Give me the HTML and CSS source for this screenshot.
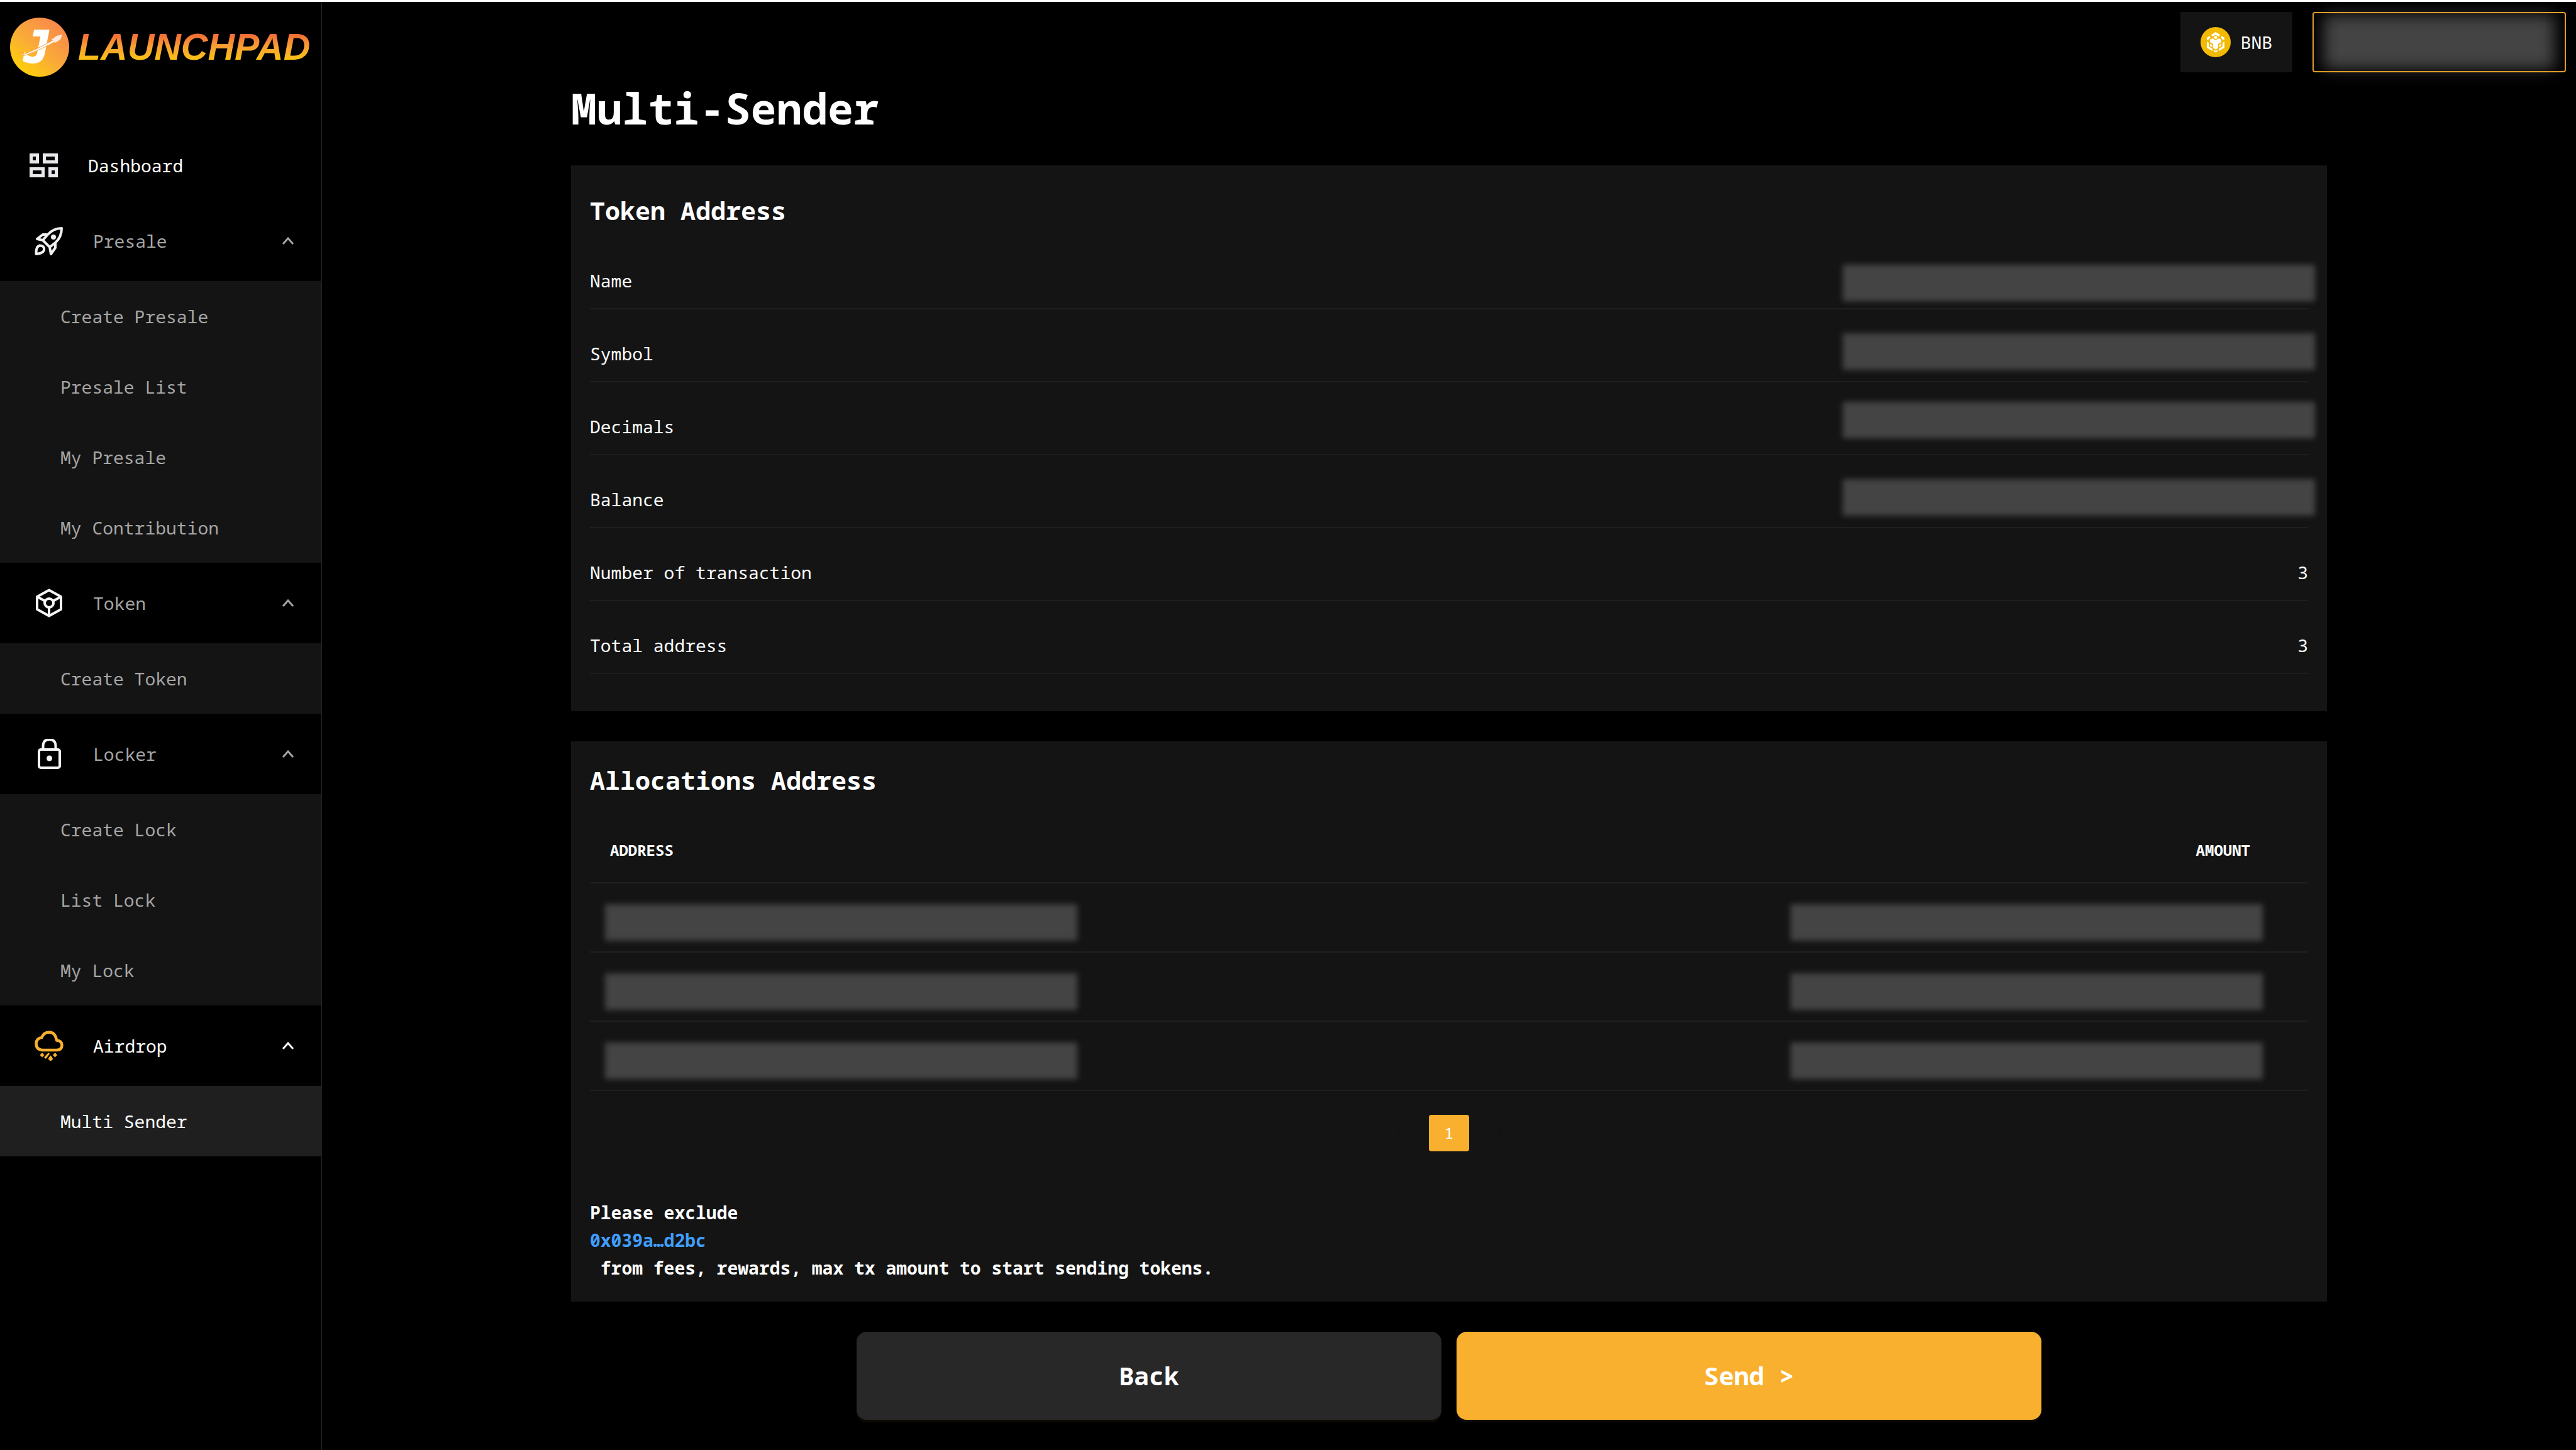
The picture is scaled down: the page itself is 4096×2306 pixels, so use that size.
FILE: index.html
```html
<!DOCTYPE html>
<html lang="en">
<head>
<meta charset="utf-8">
<title>Launchpad – Multi-Sender</title>
<meta name="viewport" content="width=device-width, initial-scale=1">
<link rel="stylesheet" href="styles.css">
</head>
<body>
<svg class="defs" width="0" height="0" aria-hidden="true">
  <symbol id="chevron" viewBox="0 0 20 14"><path d="M2 12 L10 3 L18 12" fill="none" stroke="currentColor" stroke-width="3"/></symbol>
</svg>
<div class="layout">
  <aside class="sidebar">
    <a class="logo" href="#">
      <svg class="logo-mark" viewBox="0 0 94 94" aria-hidden="true">
        <defs>
          <linearGradient id="coin" x1="0.15" y1="0.9" x2="0.8" y2="0.1">
            <stop offset="0" stop-color="#ffd10a"/><stop offset="0.5" stop-color="#f9a93a"/><stop offset="1" stop-color="#f98a4a"/>
          </linearGradient>
        </defs>
        <circle cx="47" cy="47" r="47" fill="url(#coin)"/>
        <text class="logo-letter" x="22" y="71">J</text>
        <path d="M17 55 Q18 59 23 58 Q48 48 72 34 L80 28 L83 27 L81 33 L74 37 Q50 51 24 60 Q17 61 17 55 Z" fill="#fff" stroke="#f9a348" stroke-width="1"/>
        <path d="M66 35 L74 29 L83 27 L80 35 L72 40 Z" fill="#ffe9dc"/>
      </svg>
      <span class="logo-text">LAUNCHPAD</span>
    </a>
    <nav class="menu">
      <a class="menu-dashboard" href="#">
        <svg class="icon" viewBox="0 0 48 48" aria-hidden="true"><g fill="none" stroke="#e8e8ec" stroke-width="5"><path d="M3.500 7.500H13.500V18.500H3.500ZM24.500 7.500H43.500V18.500H24.500ZM3.500 29.500H22.500V40.500H3.500ZM33.500 29.500H43.500V40.500H33.500Z"/></g></svg>
        Dashboard
      </a>

      <button class="menu-head" type="button">
        <svg class="icon" viewBox="0 0 48 48" aria-hidden="true"><g fill="none" stroke="#f0f0f2" stroke-width="4" stroke-linejoin="round"><path d="M44 4 Q31 4 22 14 L14 23 L25 34 L34 27 Q44 18 44 4Z"/><path d="M22 14 L14 14 L5 21 L14 23"/><path d="M34 27 L34 35 L27 45 L25 34"/><path d="M3.500 45 Q3 33 9 31.500 Q17 31.500 16 39 Q14 44 3.500 45Z"/></g><circle cx="31" cy="18" r="4" fill="#f0f0f2"/></svg>
        <span class="menu-label">Presale</span>
        <svg class="chevron" aria-hidden="true"><use href="#chevron"/></svg>
      </button>
      <ul class="submenu">
        <li><a href="#">Create Presale</a></li>
        <li><a href="#">Presale List</a></li>
        <li><a href="#">My Presale</a></li>
        <li><a href="#">My Contribution</a></li>
      </ul>

      <button class="menu-head" type="button">
        <svg class="icon" viewBox="0 0 48 48" aria-hidden="true"><g fill="none" stroke="#f5f5f7" stroke-width="4" stroke-linejoin="round"><path d="M24 3.500 L43 14 V34 L24 44.500 L5 34 V14Z"/><circle cx="24" cy="24" r="7"/><path d="M5 14 L18 21 M43 14 L30 21 M24 31 V44"/></g></svg>
        <span class="menu-label">Token</span>
        <svg class="chevron" aria-hidden="true"><use href="#chevron"/></svg>
      </button>
      <ul class="submenu">
        <li><a href="#">Create Token</a></li>
      </ul>

      <button class="menu-head" type="button">
        <svg class="icon" viewBox="0 0 48 48" aria-hidden="true"><g fill="none" stroke="#f5f5f7" stroke-width="4"><rect x="8" y="17" width="33" height="29" rx="3"/><path d="M14.500 17 V11 Q15 1 24.500 1 Q34 1 34.500 11 V17"/></g><circle cx="24.500" cy="31" r="4.500" fill="#f5f5f7"/></svg>
        <span class="menu-label">Locker</span>
        <svg class="chevron" aria-hidden="true"><use href="#chevron"/></svg>
      </button>
      <ul class="submenu">
        <li><a href="#">Create Lock</a></li>
        <li><a href="#">List Lock</a></li>
        <li><a href="#">My Lock</a></li>
      </ul>

      <button class="menu-head is-open" type="button">
        <svg class="icon" viewBox="0 0 48 48" aria-hidden="true"><path d="M13 31 Q3.500 30 3.500 20.500 Q4 12 12.500 11 Q15 3 24.500 2.500 Q34 3 36 15.500 Q44.500 16 44.500 23.500 Q44 31 36 31Z" fill="none" stroke="#f9b02f" stroke-width="4.500" stroke-linejoin="round"/><path d="M13 35 l3.500 4 -3.500 3.500 -3.500 -3.500z M33.500 35 l3.500 4 -3.500 3.500 -3.500 -3.500z M23 35 l2 2 -6 8 -3 -2.500z M26.500 39.500 q4 4.500 3.500 6 q-3.500 5 -7 0 q-0.500 -2 3.500 -6z" fill="#f9b02f"/></svg>
        <span class="menu-label">Airdrop</span>
        <svg class="chevron" aria-hidden="true"><use href="#chevron"/></svg>
      </button>
      <ul class="submenu">
        <li><a class="is-active" href="#">Multi Sender</a></li>
      </ul>
    </nav>
  </aside>

  <main class="main">
    <header class="topbar">
      <button class="chain" type="button">
        <svg class="icon" viewBox="0 0 48 48" aria-hidden="true"><circle cx="24" cy="24" r="24" fill="#f3ba05"/><g fill="#fff"><path d="M24 8 L31.500 12.500 L28.500 15 L24 12.500 L19.500 15 L16.500 12.500Z"/><circle cx="24" cy="16.500" r="2.500"/><path d="M19 18 L24 21 L29 18 L33 20 V24 L28 27 V33 L24 36 L20 33 V27 L15 24 V20Z"/><path d="M10 17 L14 14.500 L16 16 L13 20 L10 20.500Z M38 17 L34 14.500 L32 16 L35 20 L38 20.500Z M10 23 L13 25 V31 L19 34.500 V38 L10 33Z M38 23 L35 25 V31 L29 34.500 V38 L38 33Z M15 26.500 L18.500 28.500 V32 L15 30Z M33 26.500 L29.500 28.500 V32 L33 30Z M21 36 L24 38 L27 36 V38.500 L24 40.500 L21 38.500Z"/></g></svg>
        BNB
      </button>
      <button class="wallet" type="button" aria-label="Wallet account"></button>
    </header>

    <div class="content">
      <h1>Multi-Sender</h1>

      <section class="card card-token">
        <h2>Token Address</h2>
        <dl class="facts">
          <div><dt>Name</dt><dd></dd></div>
          <div><dt>Symbol</dt><dd></dd></div>
          <div><dt>Decimals</dt><dd>18</dd></div>
          <div><dt>Balance</dt><dd></dd></div>
          <div><dt>Number of transaction</dt><dd>3</dd></div>
          <div><dt>Total address</dt><dd>3</dd></div>
        </dl>
        <div class="masks" aria-hidden="true">
          <span class="mask"></span>
          <span class="mask"></span>
          <span class="mask"></span>
          <span class="mask mask-last"></span>
        </div>
      </section>

      <section class="card card-alloc">
        <h2>Allocations Address</h2>
        <table class="alloc">
          <thead><tr><th scope="col">ADDRESS</th><th scope="col" class="amount">AMOUNT</th></tr></thead>
          <tbody>
            <tr><td><span class="mask"></span></td><td class="amount"><span class="mask"></span></td></tr>
            <tr><td><span class="mask"></span></td><td class="amount"><span class="mask"></span></td></tr>
            <tr><td><span class="mask"></span></td><td class="amount"><span class="mask"></span></td></tr>
          </tbody>
        </table>
        <nav class="pager" aria-label="Pages">
          <button class="pager-arrow" type="button" aria-label="Previous page" disabled><svg viewBox="0 0 12 22" aria-hidden="true"><path d="M11 1 L2 11 L11 21"/></svg></button>
          <button class="pager-page" type="button">1</button>
          <button class="pager-arrow" type="button" aria-label="Next page" disabled><svg viewBox="0 0 12 22" aria-hidden="true"><path d="M1 1 L10 11 L1 21"/></svg></button>
        </nav>
        <div class="note">
          <p>Please exclude</p>
          <a href="#">0x039a…d2bc</a>
          <p>&nbsp;from fees, rewards, max tx amount to start sending tokens.</p>
        </div>
      </section>

      <div class="actions">
        <button class="btn btn-back" type="button">Back</button>
        <button class="btn btn-send" type="button">Send &gt;</button>
      </div>
    </div>
  </main>
</div>
</body>
</html>
```
FILE: styles.css
```css
:root {
  --accent: #f9b02f;
  --panel: #141414;
  --line: #1f1f1f;
  --muted: #a6a6a6;
}

* { box-sizing: border-box; }

body {
  margin: 0;
  border-top: 3px solid #fff;
  background: #000;
  color: #fff;
  font-family: "Noto Sans Mono", "DejaVu Sans Mono", "Liberation Mono", monospace;
  font-size: 28px;
  line-height: 44px;
}

h1, h2, p, ul, dl, dd { margin: 0; padding: 0; }
ul { list-style: none; }
a { color: inherit; text-decoration: none; }
button {
  margin: 0;
  padding: 0;
  border: 0;
  background: none;
  color: inherit;
  font: inherit;
}
.defs { position: absolute; }
.icon { flex: none; width: 48px; height: 48px; }

.layout {
  display: flex;
  min-height: calc(100vh - 3px);
}

/* Sidebar */
.sidebar {
  flex: none;
  width: 512px;
  border-right: 2px solid var(--line);
}
.logo {
  display: flex;
  align-items: center;
  gap: 14px;
  height: 144px;
  padding-left: 16px;
}
.logo-mark { flex: none; width: 94px; height: 94px; }
.logo-letter {
  fill: #fff;
  stroke: #fff;
  stroke-width: 2;
  font: italic bold 70px "DejaVu Sans Mono", monospace;
}
.logo-text {
  background: linear-gradient(#f26a36 25%, #f9a233 50%, #fcc313 75%);
  background-clip: text;
  -webkit-background-clip: text;
  color: transparent;
  font: italic bold 59px/84px "Liberation Sans", Arial, sans-serif;
}
.menu { padding-top: 60px; }
.menu-dashboard {
  display: flex;
  align-items: center;
  gap: 46px;
  height: 112px;
  padding-left: 46px;
}
.menu-head {
  display: flex;
  align-items: center;
  gap: 46px;
  width: 100%;
  height: 128px;
  padding: 0 42px 0 54px;
  color: var(--muted);
  text-align: left;
}
.menu-head.is-open { color: #fff; }
.menu-label { flex: 1; }
.chevron { width: 20px; height: 14px; }
.submenu { background: var(--panel); }
.submenu a {
  display: flex;
  align-items: center;
  height: 112px;
  padding-left: 96px;
  color: var(--muted);
}
.submenu a.is-active {
  background: var(--line);
  color: #fff;
}

/* Top bar */
.main { flex: 1; min-width: 0; }
.topbar {
  display: flex;
  justify-content: flex-end;
  gap: 32px;
  padding: 16px 16px 15px;
}
.chain {
  display: flex;
  align-items: center;
  gap: 16px;
  height: 96px;
  padding: 0 32px;
  background: var(--panel);
}
.wallet {
  position: relative;
  width: 403px;
  height: 96px;
}
.wallet::before {
  content: "";
  position: absolute;
  inset: 5px 18px;
  background: #444;
  filter: blur(12px);
}
.wallet::after {
  content: "";
  position: absolute;
  inset: 0;
  border: 2px solid #e09d28;
  border-radius: 4px;
}

/* Content */
.content {
  width: min(100%, 2792px);
  margin: 0 auto;
  padding-bottom: 48px;
}
h1 {
  margin-bottom: 49px;
  font-size: 68px;
  line-height: 84px;
}
h2 { font-size: 40px; line-height: 60px; }

.card {
  position: relative;
  padding: 32px 30px;
  background: var(--panel);
}
.card-token {
  margin-bottom: 48px;
  padding-top: 42px;
  padding-bottom: 59px;
}
.card-token h2 { margin-bottom: 11px; }
.facts div {
  display: flex;
  justify-content: space-between;
  padding: 48px 0 22px;
  border-bottom: 2px solid var(--line);
}

/* Blurred covers over private values */
.mask {
  display: block;
  width: 751px;
  height: 58px;
  background: #444;
  filter: blur(5px);
}
.masks {
  position: absolute;
  top: 158px;
  right: 19px;
  display: grid;
  gap: 51px;
}
.mask-last { margin-top: 14px; }

.alloc {
  width: 100%;
  margin-top: 30px;
  border-spacing: 0;
}
.alloc th {
  padding: 32px;
  border-bottom: 2px solid var(--line);
  font-size: 24px;
  line-height: 38px;
  text-align: left;
}
.alloc th.amount { padding-right: 92px; text-align: right; }
.alloc td {
  padding: 33px 72px 17px 24px;
  border-bottom: 2px solid var(--line);
}
.alloc td.amount .mask { margin-left: auto; }

.pager {
  display: flex;
  justify-content: center;
  gap: 10px;
  margin: 38px 0 75px;
}
.pager-page {
  width: 64px;
  height: 58px;
  border-radius: 4px;
  background: var(--accent);
  font-size: 24px;
}
.pager-arrow {
  display: flex;
  align-items: center;
  justify-content: center;
  width: 76px;
}
.pager-arrow svg {
  width: 12px;
  height: 22px;
  fill: none;
  stroke: #0e0e0e;
  stroke-width: 1;
}

.note { font-weight: bold; }
.note a { display: block; color: #409eff; }

.actions {
  display: flex;
  justify-content: center;
  gap: 24px;
  margin-top: 48px;
}
.btn {
  width: 930px;
  height: 140px;
  border-radius: 16px;
  box-shadow: 0 4px 0 rgba(249, 176, 47, 0.06);
  font-size: 40px;
  font-weight: bold;
}
.btn-back { background: #282828; }
.btn-send { background: var(--accent); }
```
